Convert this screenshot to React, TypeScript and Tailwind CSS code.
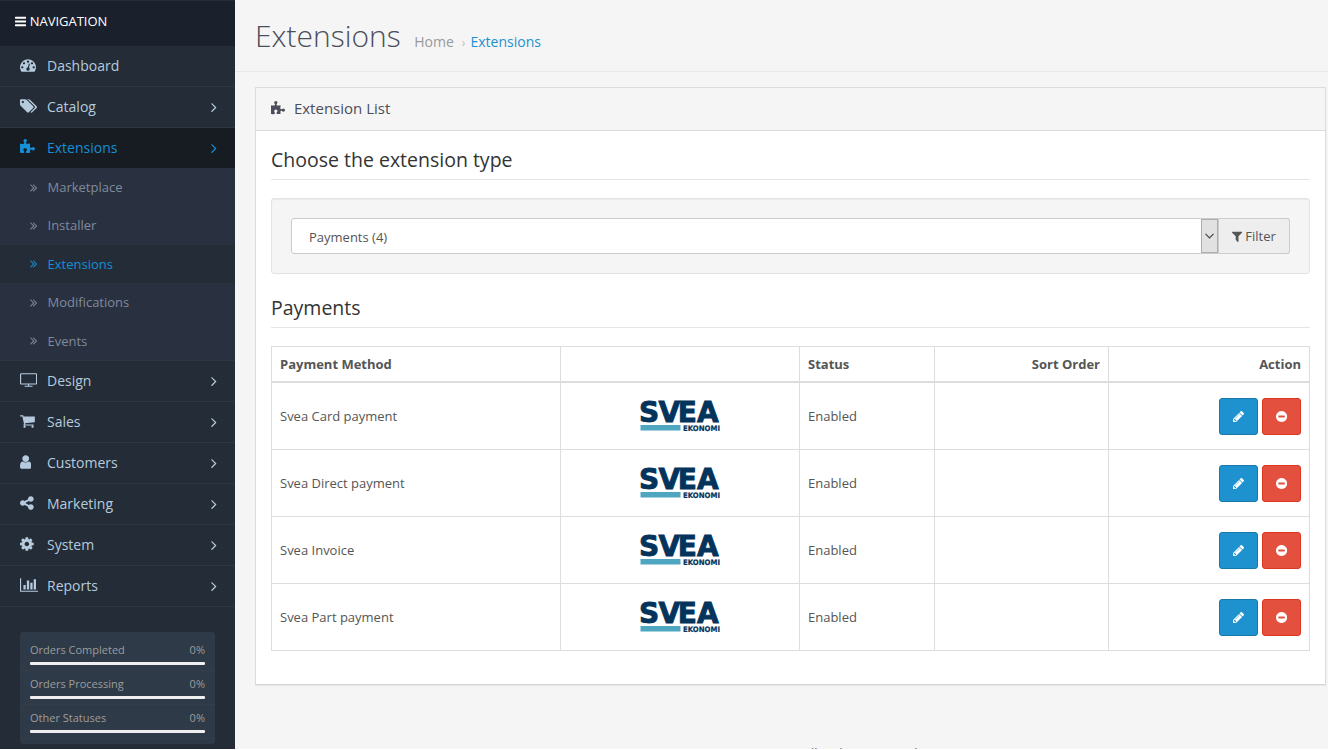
import React from "react";

type IconDef = { x: number; w: number; d: string };

const ICONS = {
  bars: { x: 128, w: 1536, d: "M1664 1344v128q0 26-19 45t-45 19h-1408q-26 0-45-19t-19-45v-128q0-26 19-45t45-19h1408q26 0 45 19t19 45zm0-512v128q0 26-19 45t-45 19h-1408q-26 0-45-19t-19-45v-128q0-26 19-45t45-19h1408q26 0 45 19t19 45zm0-512v128q0 26-19 45t-45 19h-1408q-26 0-45-19t-19-45v-128q0-26 19-45t45-19h1408q26 0 45 19t19 45z" },
  dashboard: { x: 0, w: 1792, d: "M384 1152q0-53-37.5-90.5t-90.5-37.5-90.5 37.5-37.5 90.5 37.5 90.5 90.5 37.5 90.5-37.5 37.5-90.5zm192-448q0-53-37.5-90.5t-90.5-37.5-90.5 37.5-37.5 90.5 37.5 90.5 90.5 37.5 90.5-37.5 37.5-90.5zm428 481l101-382q6-26-7.5-48.5t-38.5-29.5-48 6.5-30 39.5l-101 382q-60 5-107 43.5t-63 98.5q-20 77 20 146t117 89 146-20 89-117q16-60-6-117t-72-91zm660-33q0-53-37.5-90.5t-90.5-37.5-90.5 37.5-37.5 90.5 37.5 90.5 90.5 37.5 90.5-37.5 37.5-90.5zm-640-640q0-53-37.5-90.5t-90.5-37.5-90.5 37.5-37.5 90.5 37.5 90.5 90.5 37.5 90.5-37.5 37.5-90.5zm448 192q0-53-37.5-90.5t-90.5-37.5-90.5 37.5-37.5 90.5 37.5 90.5 90.5 37.5 90.5-37.5 37.5-90.5zm320 448q0 261-141 483-19 29-54 29h-1402q-35 0-54-29-141-221-141-483 0-182 71-348t191-286 286-191 348-71 348 71 286 191 191 286 71 348z" },
  tags: { x: 0, w: 1920, d: "M448 448q0-53-37.500-90.500t-90.500-37.500-90.500 37.500-37.500 90.500 37.500 90.500 90.500 37.500 90.500-37.500 37.500-90.500zm1067 576q0 53-37 90l-491 492q-39 37-91 37-53 0-90-37l-715-716q-38-37-64.500-101t-26.500-117v-416q0-52 38-90t90-38h416q53 0 117 26.500t102 64.500l715 714q37 39 37 91zm384 0q0 53-37 90l-491 492q-39 37-91 37-36 0-59-14t-53-45l470-470q37-37 37-90 0-52-37-91l-715-714q-38-38-102-64.500t-117-26.500h224q53 0 117 26.500t102 64.500l715 714q37 39 37 91z" },
  puzzle: { x: 64, w: 1664, d: "M1728 1098q0 81-44.5 135t-123.5 54q-41 0-77.5-17.5t-59-38-56.5-38-71-17.5q-110 0-110 124 0 39 16 115t15 115v5q-22 0-33 1-34 3-97.5 11.5t-115.5 13.5-98 5q-61 0-103-26.5t-42-83.5q0-37 17.5-71t38-56.5 38-59 17.5-77.5q0-79-54-123.5t-135-44.5q-84 0-143 45.5t-59 127.5q0 43 15 83t33.5 64.5 33.5 53 15 50.5q0 45-46 89-37 35-117 35-95 0-245-24-9-2-27.5-4t-27.5-4l-13-2q-1 0-3-1-2 0-2-1v-1024q2 1 17.5 3.5t34 5 21.5 3.5q150 24 245 24 80 0 117-35 46-44 46-89 0-22-15-50.5t-33.5-53-33.5-64.5-15-83q0-82 59-127.5t144-45.5q80 0 134 44.5t54 123.5q0 41-17.5 77.5t-38 59-38 56.5-17.5 71q0 57 42 83.5t103 26.5q64 0 180-15t163-17v2q-1 2-3.5 17.5t-5 34-3.5 21.5q-24 150-24 245 0 80 35 117 44 46 89 46 22 0 50.5-15t53-33.5 64.5-33.5 83-15q82 0 127.5 59t45.5 143z" },
  desktop: { x: 0, w: 1920, d: "M1792 1248v-960q0-13-9.5-22.5t-22.5-9.5h-1600q-13 0-22.5 9.5t-9.5 22.5v960q0 13 9.5 22.5t22.5 9.5h1600q13 0 22.5-9.5t9.5-22.5zm128-960v960q0 66-47 113t-113 47h-736v128h352q14 0 23 9t9 23v64q0 14-9 23t-23 9h-832q-14 0-23-9t-9-23v-64q0-14 9-23t23-9h352v-128h-736q-66 0-113-47t-47-113v-960q0-66 47-113t113-47h1600q66 0 113 47t47 113z" },
  cart: { x: 64, w: 1664, d: "M704 1536q0 52-38 90t-90 38-90-38-38-90 38-90 90-38 90 38 38 90zm896 0q0 52-38 90t-90 38-90-38-38-90 38-90 90-38 90 38 38 90zm128-1088v512q0 24-16.5 42.5t-40.5 21.5l-1044 122q13 60 13 70 0 16-24 64h920q26 0 45 19t19 45-19 45-45 19h-1024q-26 0-45-19t-19-45q0-11 8-31.5t16-36 21.5-40 15.5-29.5l-177-823h-204q-26 0-45-19t-19-45 19-45 45-19h256q16 0 28.500 6.500t19.500 15.500 13 24.500 8 26 5.500 29.500 4.500 26h1201q26 0 45 19t19 45z" },
  user: { x: 256, w: 1280, d: "M1536 1399q0 109-62.5 187t-150.5 78h-854q-88 0-150.5-78t-62.5-187q0-85 8.5-160.5t31.500-152 58.500-131 94-89 134.500-34.500q131 128 313 128t313-128q76 0 134.500 34.500t94 89 58.500 131 31.500 152 8.500 160.500zm-256-887q0 159-112.500 271.500t-271.500 112.500-271.500-112.500-112.500-271.500 112.500-271.500 271.500-112.500 271.500 112.500 112.500 271.500z" },
  share: { x: 128, w: 1536, d: "M1344 1024q133 0 226.500 93.500t93.500 226.500-93.500 226.500-226.500 93.500-226.500-93.500-93.500-226.500q0-12 2-34l-360-180q-92 86-218 86-133 0-226.500-93.500t-93.500-226.500 93.500-226.500 226.500-93.500q126 0 218 86l360-180q-2-22-2-34 0-133 93.500-226.500t226.500-93.500 226.500 93.500 93.500 226.500-93.500 226.500-226.500 93.500q-126 0-218-86l-360 180q2 22 2 34t-2 34l360 180q92-86 218-86z" },
  cog: { x: 128, w: 1536, d: "M1152 896q0-106-75-181t-181-75-181 75-75 181 75 181 181 75 181-75 75-181zm512-109v222q0 12-8 23t-20 13l-185 28q-19 54-39 91 35 50 107 138 10 12 10 25t-9 23q-27 37-99 108t-94 71q-12 0-26-9l-138-108q-44 23-91 38-16 136-29 186-7 28-36 28h-222q-14 0-24.5-8.5t-11.5-21.5l-28-184q-49-16-90-37l-141 107q-10 9-25 9-14 0-25-11-126-114-165-168-7-10-7-23 0-12 8-23 15-21 51-66.5t54-70.5q-27-50-41-99l-183-27q-13-2-21-12.5t-8-23.5v-222q0-12 8-23t19-13l186-28q14-46 39-92-40-57-107-138-10-12-10-24 0-10 9-23 26-36 98.5-107.5t94.500-71.500q13 0 26 10l138 107q44-23 91-38 16-136 29-186 7-28 36-28h222q14 0 24.500 8.500t11.500 21.500l28 184q49 16 90 37l142-107q9-9 24-9 13 0 25 10 129 119 165 170 7 8 7 22 0 12-8 23-15 21-51 66.500t-54 70.500q26 50 41 98l183 28q13 2 21 12.500t8 23.500z" },
  chart: { x: 0, w: 2048, d: "M640 896v512h-256v-512h256zm384-512v1024h-256v-1024h256zm1024 1152v128h-2048v-1536h128v1408h1920zm-640-896v768h-256v-768h256zm384-384v1152h-256v-1152h256z" },
  angle: { x: 569, w: 640, d: "M1171 960q0 13-10 23l-466 466q-10 10-23 10t-23-10l-50-50q-10-10-10-23t10-23l393-393-393-393q-10-10-10-23t10-23l50-50q10-10 23-10t23 10l466 466q10 10 10 23z" },
  angles: { x: 505, w: 1024, d: "M1107 960q0 13-10 23l-466 466q-10 10-23 10t-23-10l-50-50q-10-10-10-23t10-23l393-393-393-393q-10-10-10-23t10-23l50-50q10-10 23-10t23 10l466 466q10 10 10 23zm384 0q0 13-10 23l-466 466q-10 10-23 10t-23-10l-50-50q-10-10-10-23t10-23l393-393-393-393q-10-10-10-23t10-23l50-50q10-10 23-10t23 10l466 466q10 10 10 23z" },
  filter: { x: 192, w: 1408, d: "M1595 295q17 41-14 70l-493 493v742q0 42-39 59-13 5-25 5-27 0-45-19l-256-256q-19-19-19-45v-486l-493-493q-31-29-14-70 17-39 59-39h1280q42 0 59 39z" },
  pencil: { x: 128, w: 1536, d: "M491 1536l91-91-235-235-91 91v107h128v128h107zm523-928q0-22-22-22-10 0-17 7l-542 542q-7 7-7 17 0 22 22 22 10 0 17-7l542-542q7-7 7-17zm-54-192l416 416-832 832h-416v-416zm683 96q0 53-37 90l-166 166-416-416 166-165q36-38 90-38 53 0 91 38l235 234q37 39 37 91z" },
  minus: { x: 128, w: 1536, d: "M1344 960v-128q0-26-19-45t-45-19h-768q-26 0-45 19t-19 45v128q0 26 19 45t45 19h768q26 0 45-19t19-45zm320-64q0 209-103 385.5t-279.5 279.5-385.5 103-385.5-103-279.5-279.5-103-385.5 103-385.5 279.5-279.5 385.5-103 385.5 103 279.5 279.5 103 385.5z" },
} satisfies Record<string, IconDef>;

type IconName = keyof typeof ICONS;

function Icon({ name, size, className = "" }: { name: IconName; size: number; className?: string }) {
  const { x, w, d } = ICONS[name];
  return (
    <svg
      viewBox={`${x} 0 ${w} 1792`}
      width={(w / 1792) * size}
      height={size}
      fill="currentColor"
      className={`shrink-0 ${className}`}
      aria-hidden="true"
    >
      <path d={d} />
    </svg>
  );
}

function MenuItem({ icon, label, arrow = true, active = false }: { icon: IconName; label: string; arrow?: boolean; active?: boolean }) {
  return (
    <a
      className={`flex h-[41px] items-center border-t border-[#2c3841] pl-5 pr-[18px] text-sm first-of-type:border-[#1b202d] ${
        active ? "bg-[#171b22] text-[#158fd6]" : "text-[#b5cbdd]"
      }`}
    >
      <span className="flex w-[27px] pb-[2px]">
        <Icon name={icon} size={16} />
      </span>
      <span className="grow">{label}</span>
      {arrow && <Icon name="angle" size={16} />}
    </a>
  );
}

const SUBMENU = ["Marketplace", "Installer", "Extensions", "Modifications", "Events"];
const STATS = ["Orders Completed", "Orders Processing", "Other Statuses"];
const PAYMENTS = ["Svea Card payment", "Svea Direct payment", "Svea Invoice", "Svea Part payment"];

function Sidebar() {
  return (
    <nav className="w-[235px] shrink-0 bg-[#242c37]">
      <div className="flex h-[45px] items-center gap-[3px] border-t border-[#242c37] bg-[#1b202d] pl-[15px] text-[13px] text-white">
        <Icon name="bars" size={13} className="mb-[3px]" />
        <span className="pb-0.5 pl-[0.5px]">NAVIGATION</span>
      </div>
      <MenuItem icon="dashboard" label="Dashboard" arrow={false} />
      <MenuItem icon="tags" label="Catalog" />
      <MenuItem icon="puzzle" label="Extensions" active />
      <div className="bg-[#293040]">
        {SUBMENU.map((label) => (
          <a
            key={label}
            className={`flex h-[38.4px] items-center pl-[30px] text-[13px] ${
              label === "Extensions" ? "bg-[#242c37] text-[#158fd6]" : "text-[#808b9c]"
            }`}
          >
            <span className="flex w-[17.5px]">
              <Icon name="angles" size={13} />
            </span>
            <span className="pt-px">{label}</span>
          </a>
        ))}
      </div>
      <MenuItem icon="desktop" label="Design" />
      <MenuItem icon="cart" label="Sales" />
      <MenuItem icon="user" label="Customers" />
      <MenuItem icon="share" label="Marketing" />
      <MenuItem icon="cog" label="System" />
      <MenuItem icon="chart" label="Reports" />
      <div className="border-t border-[#2c3841] px-5 pt-[25px]">
        <div className="h-28 rounded-[3px] bg-[#2e3a47] pt-[5px]">
          {STATS.map((label) => (
            <div key={label} className="h-[34px] border-b border-[#373d47] px-2.5 pt-1 text-[11px] text-[#9d9d9d]">
              <div className="flex h-[21px] items-center justify-between pb-0.5">
                <span>{label}</span>
                <span>0%</span>
              </div>
              <div className="h-[3px] rounded-[1px] bg-[#efefef]" />
            </div>
          ))}
        </div>
      </div>
    </nav>
  );
}

function SveaLogo() {
  return (
    <svg width="82" height="32" viewBox="0 0 82 32" className="mx-auto -mt-px block">
      <text
        x="0 19.500 38.700 58" y="21.500" fontSize="28" fontWeight="700" fontFamily="DejaVu Sans, sans-serif"
        fill="#04335b" stroke="#04335b" strokeWidth="0.900"
      >
        SVEA
      </text>
      <rect x="1.500" y="25" width="40" height="5.500" fill="#4ea6c1" />
      <text
        x="44" y="30.500" fontSize="7.500" fontWeight="700" fontFamily="DejaVu Sans, sans-serif"
        fill="#04335b" stroke="#04335b" strokeWidth="0.200" textLength="37" lengthAdjust="spacingAndGlyphs"
      >
        EKONOMI
      </text>
    </svg>
  );
}

function SectionHeading({ children }: { children: React.ReactNode }) {
  return <h3 className="h-[33px] border-b border-[#e5e5e5] text-[19.5px] leading-[26px] text-[#333]">{children}</h3>;
}

function PaymentTable() {
  const cell = "border border-[#ddd] px-2 pt-0.5";
  return (
    <table className="w-full table-fixed border-collapse text-left text-[13px] text-[#555]">
      <colgroup>
        <col className="w-[289px]" />
        <col className="w-[239px]" />
        <col className="w-[135px]" />
        <col className="w-[174px]" />
        <col />
      </colgroup>
      <thead>
        <tr className="h-[35.500px]">
          <th className={`${cell} border-b-2`}>Payment Method</th>
          <th className={`${cell} border-b-2`} />
          <th className={`${cell} border-b-2`}>Status</th>
          <th className={`${cell} border-b-2 text-right`}>Sort Order</th>
          <th className={`${cell} border-b-2 text-right`}>Action</th>
        </tr>
      </thead>
      <tbody>
        {PAYMENTS.map((name) => (
          <tr key={name} className="h-[67px]">
            <td className={cell}>{name}</td>
            <td className={cell}>
              <SveaLogo />
            </td>
            <td className={cell}>Enabled</td>
            <td className={cell} />
            <td className={cell}>
              <div className="flex justify-end gap-1 text-white">
                <button className="flex h-[37px] w-[39px] items-center justify-center rounded-[3px] border border-[#1978ab] bg-[#1e91cf]">
                  <Icon name="pencil" size={13} />
                </button>
                <button className="flex h-[37px] w-[39px] items-center justify-center rounded-[3px] border border-[#dd3520] bg-[#e3503e]">
                  <Icon name="minus" size={13} />
                </button>
              </div>
            </td>
          </tr>
        ))}
      </tbody>
    </table>
  );
}

export default function App() {
  return (
    <div className="h-[750px] bg-white">
      <div className="flex h-[749px] w-[1328px] overflow-hidden bg-[#f5f5f5] font-['Open_Sans',sans-serif] text-[13px]">
        <Sidebar />
        <main className="min-w-0 grow">
          <header className="flex h-[72px] items-baseline border-b border-[#e8e8e8] pl-5 pt-[16px]">
            <h1 className="text-[30px] font-light leading-[40px] text-[#4c4d5a]">Extensions</h1>
            <div className="flex items-baseline pl-[13.5px] text-sm text-[#999]">
              <span>Home</span>
              <span className="pl-[8px] pr-[5px] text-[12px] text-[#bbb]">›</span>
              <span className="text-[#1e91cf]">Extensions</span>
            </div>
          </header>
          <section className="ml-5 mr-[2px] mt-[15px] h-[598px] border border-[#dcdcdc] border-b-[#d5d5d5] bg-white shadow-[0_1px_1px_rgba(0,0,0,0.05)]">
            <div className="flex h-[43px] items-center border-b border-[#dcdcdc] bg-[#f5f5f5] pl-[15px] text-[15px] text-[#4c4d5a]">
              <Icon name="puzzle" size={15} className="mb-0.5" />
              <span className="pb-px pl-[9px]">Extension List</span>
            </div>
            <div className="px-[15px] pt-[16px]">
              <SectionHeading>Choose the extension type</SectionHeading>
              <div className="mt-[18px] flex h-[76px] rounded-[3px] border border-[#e3e3e3] bg-[#f5f5f5] p-[19px] shadow-[inset_0_1px_1px_rgba(0,0,0,0.05)]">
                <div className="flex h-9 grow items-center rounded-l-[3px] border border-[#ccc] bg-white pl-[17px] text-[#555]">
                  <span className="grow pt-[3px]">Payments (4)</span>
                  <span className="flex h-[34px] w-[17px] items-center justify-center border border-[#adadad] bg-[#e1e1e1]">
                    <svg width="9" height="6" viewBox="0 0 9 6" fill="none" stroke="#444" strokeWidth="1.200">
                      <path d="M0.500 0.800 4.500 4.800 8.500 0.800" />
                    </svg>
                  </span>
                </div>
                <button className="flex h-9 w-[71px] items-center justify-center gap-[3px] rounded-r-[3px] border border-l-0 border-[#ccc] bg-[#eee] text-[#555]">
                  <Icon name="filter" size={13} />
                  <span className="pt-0.5">Filter</span>
                </button>
              </div>
              <div className="mt-[21px]">
                <SectionHeading>Payments</SectionHeading>
              </div>
              <div className="mt-[18px]">
                <PaymentTable />
              </div>
            </div>
          </section>
          <footer className="mt-[58px] pl-[19px] text-center text-[13px] leading-5 text-[#666]">
            <span className="text-[#1e91cf]">OpenCart</span> <span className="text-[11px]">©</span> 2009-2022 All Rights Reserved.
          </footer>
        </main>
      </div>
    </div>
  );
}
